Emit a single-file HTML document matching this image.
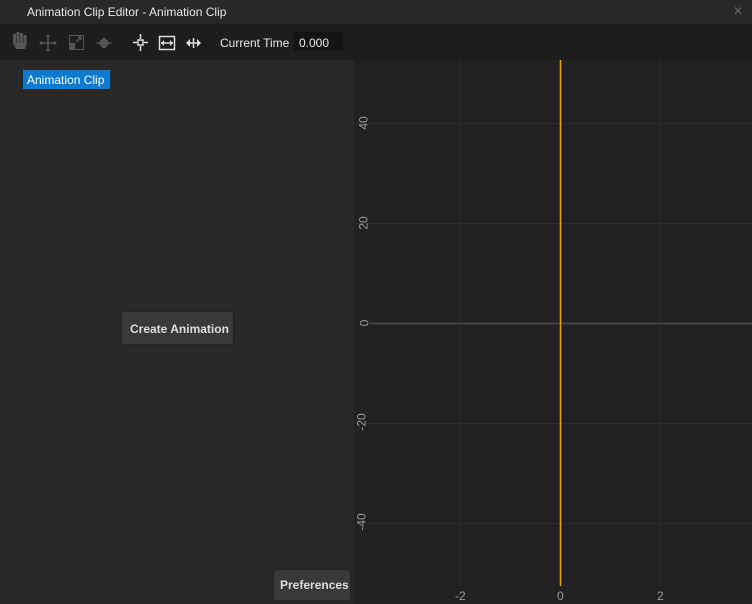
<!DOCTYPE html>
<html><head><style>
body{margin:0;width:752px;height:604px;overflow:hidden;background:#282828;font-family:"Liberation Sans",sans-serif;font-size:12px;color:#ddd;position:relative}
.a{position:absolute}
.lbl{color:#9a9a9a;font-size:12px}
.v{transform:rotate(-90deg);transform-origin:center}
</style></head><body>
<div class="a" style="left:0;top:0;width:752px;height:24px;background:#282828"></div>
<div class="a" style="left:27px;top:5px;color:#e8e8e8">Animation Clip Editor - Animation Clip</div>
<div class="a" style="left:733px;top:4px;color:#666;font-size:12px">✕</div>
<div class="a" style="left:0;top:24px;width:752px;height:36px;background:#1d1d1d"></div>
<svg class="a" style="left:0;top:24px" width="210" height="36">
<g fill="#555"><rect x="13" y="10" width="3" height="10"/><rect x="16.5" y="8" width="3" height="12"/><rect x="20" y="9" width="3" height="11"/><rect x="23.5" y="11" width="3" height="9"/><path d="M13 19h14l-2 6h-9z"/></g>
<g stroke="#555" stroke-width="1.5" fill="#555"><path d="M41 19h14M48 12v14" fill="none"/><path d="M48 10l-2.5 3h5zM48 28l-2.5-3h5zM39 19l3-2.5v5zM57 19l-3-2.5v5z" stroke="none"/></g>
<rect x="69.5" y="11.5" width="14" height="14" fill="none" stroke="#555"/><rect x="69" y="19" width="6" height="7" fill="#555"/><path d="M76 18l5-5M78 13h3v3" stroke="#555" fill="none" stroke-width="1.5"/>
<path d="M104 13l6 6-6 6-6-6z" fill="#555"/><path d="M96 19h16" stroke="#555"/>
<g stroke="#ddd" stroke-width="1.5" fill="none"><rect x="138" y="16" width="5" height="5"/><path d="M133 18.5h4M144 18.5h4M140.5 10v5M140.5 22v5"/></g>
<rect x="159.5" y="12.5" width="15" height="13" fill="none" stroke="#ddd" stroke-width="1.5"/><path d="M161 19h12" stroke="#ddd" stroke-width="1.5"/><path d="M161 19l3-3v6zM173 19l-3-3v6z" fill="#ddd"/>
<path d="M186 19l4-4v8zM201 19l-4-4v8z" fill="#ddd"/><path d="M190 19h7M193.5 14v10" stroke="#ddd" stroke-width="1.5"/>
</svg>
<div class="a" style="left:220px;top:36px;color:#e8e8e8">Current Time</div>
<div class="a" style="left:294px;top:32px;width:49px;height:19px;background:#141414"></div>
<div class="a" style="left:299px;top:36px;color:#e8e8e8">0.000</div>
<div class="a" style="left:23px;top:70px;width:87px;height:19px;background:#0a7bd0"></div>
<div class="a" style="left:27px;top:73px;color:#fff">Animation Clip</div>
<div class="a" style="left:121px;top:311px;width:111px;height:32px;background:#393939;border:1px solid #222;border-radius:2px"></div>
<div class="a" style="left:130px;top:322px;color:#ddd;font-weight:bold">Create Animation</div>
<div class="a" style="left:273px;top:569px;width:76px;height:30px;background:#393939;border:1px solid #222;border-radius:2px"></div>
<div class="a" style="left:280px;top:578px;color:#ddd;font-weight:bold">Preferences</div>
<div class="a" style="left:354px;top:60px;width:398px;height:544px;background:#212121"></div>
<svg class="a" style="left:354px;top:60px" width="398" height="544">
<g stroke="#2c2c2c"><path d="M106.5 0v526M306.5 0v526M0 63.5h398M0 163.5h398M0 363.5h398M0 463.5h398"/></g>
<path d="M16 263.5h382" stroke="#444" stroke-width="2"/>
<path d="M206.5 0v526" stroke="#f7a100" stroke-width="1.5"/>
</svg>
<div class="a lbl" style="left:455px;top:589px">-2</div>
<div class="a lbl" style="left:557px;top:589px">0</div>
<div class="a lbl" style="left:657px;top:589px">2</div>
<div class="a lbl v" style="left:357px;top:116px">40</div>
<div class="a lbl v" style="left:357px;top:216px">20</div>
<div class="a lbl v" style="left:361px;top:316px">0</div>
<div class="a lbl v" style="left:353px;top:415px">-20</div>
<div class="a lbl v" style="left:353px;top:515px">-40</div>
</body></html>
